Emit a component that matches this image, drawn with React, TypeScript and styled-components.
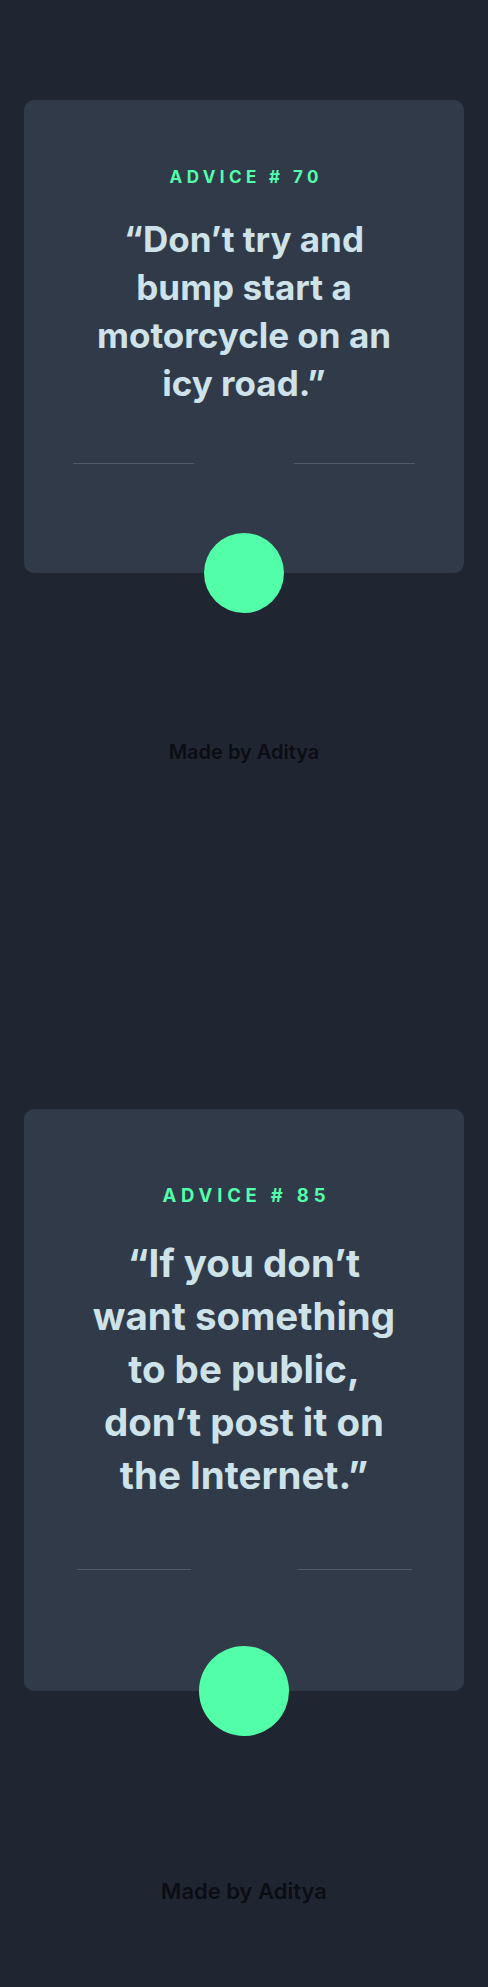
import React from "react";
import styled, { createGlobalStyle } from "styled-components";

const Global = createGlobalStyle`
  html, body { margin: 0; padding: 0; background: #1f2632; }
  body { font-family: Inter, "Noto Sans", sans-serif; }
`;

const Page = styled.main`
  min-height: 1987px;
  background: #1f2632;
  display: flex;
  flex-direction: column;
  padding-top: 100px;
  box-sizing: border-box;
`;

const Section = styled.section<{ $mt: number }>`
  display: flex;
  flex-direction: column;
  align-items: center;
  margin-top: ${(p) => p.$mt}px;
`;

const Card = styled.article<{ $padTop: number; $padBottom: number }>`
  position: relative;
  width: 440px;
  box-sizing: border-box;
  background: #313a49;
  border-radius: 10px;
  display: flex;
  flex-direction: column;
  align-items: center;
  padding: ${(p) => p.$padTop}px 0 ${(p) => p.$padBottom}px;
`;

const Label = styled.h1<{ $size: number; $spacing: number }>`
  margin: 0;
  font-size: ${(p) => p.$size}px;
  line-height: ${(p) => p.$size}px;
  font-weight: 700;
  letter-spacing: ${(p) => p.$spacing}px;
  padding-left: ${(p) => p.$spacing}px;
  color: #53ffaa;
`;

const Quote = styled.p<{ $size: number; $lineHeight: number; $gap: number }>`
  margin: ${(p) => p.$gap}px 0 0;
  text-align: center;
  font-size: ${(p) => p.$size}px;
  font-weight: 700;
  line-height: ${(p) => p.$lineHeight}px;
  letter-spacing: 0;
  color: #cee3e9;
`;

const QuoteLine = styled.span`
  display: block;
  white-space: nowrap;
`;

const Divider = styled.div<{ $gap: number; $mt: number }>`
  display: flex;
  gap: ${(p) => p.$gap}px;
  margin-top: ${(p) => p.$mt}px;
`;

const Rule = styled.span<{ $w: number }>`
  display: block;
  width: ${(p) => p.$w}px;
  height: 1px;
  background: #4f5b6d;
`;

const DiceButton = styled.button<{ $d: number }>`
  position: absolute;
  left: 50%;
  bottom: 0;
  width: ${(p) => p.$d}px;
  height: ${(p) => p.$d}px;
  transform: translate(-50%, 50%);
  border: none;
  border-radius: 50%;
  background: #52ffa8;
  padding: 0;
  cursor: pointer;
`;

const Credit = styled.footer<{ $size: number; $mt: number }>`
  margin-top: ${(p) => p.$mt}px;
  font-size: ${(p) => p.$size}px;
  line-height: ${(p) => p.$size + 4}px;
  font-weight: 600;
  color: #0b0d12;
`;

type Advice = {
  id: number;
  lines: string[];
  mt: number;
  labelSize: number;
  labelSpacing: number;
  padTop: number;
  quoteSize: number;
  quoteGap: number;
  lineHeight: number;
  dividerMt: number;
  ruleW: number;
  ruleGap: number;
  padBottom: number;
  dice: number;
  creditSize: number;
  creditMt: number;
};

const items: Advice[] = [
  {
    id: 70,
    lines: ["\u201CDon\u2019t try and", "bump start a", "motorcycle on an", "icy road.\u201D"],
    mt: 0,
    labelSize: 17,
    labelSpacing: 4.4,
    padTop: 69,
    quoteSize: 35,
    quoteGap: 29,
    lineHeight: 48,
    dividerMt: 56,
    ruleW: 121,
    ruleGap: 100,
    padBottom: 109,
    dice: 80,
    creditSize: 20,
    creditMt: 167,
  },
  {
    id: 85,
    lines: [
      "\u201CIf you don\u2019t",
      "want something",
      "to be public,",
      "don\u2019t post it on",
      "the Internet.\u201D",
    ],
    mt: 345,
    labelSize: 18.5,
    labelSpacing: 4.8,
    padTop: 77,
    quoteSize: 38.5,
    quoteGap: 32,
    lineHeight: 53,
    dividerMt: 67,
    ruleW: 114,
    ruleGap: 107,
    padBottom: 121,
    dice: 90,
    creditSize: 22,
    creditMt: 187,
  },
];

export default function App() {
  return (
    <>
      <Global />
      <Page>
        {items.map((a) => (
          <Section key={a.id} $mt={a.mt}>
            <Card $padTop={a.padTop} $padBottom={a.padBottom}>
              <Label $size={a.labelSize} $spacing={a.labelSpacing}>
                ADVICE # {a.id}
              </Label>
              <Quote $size={a.quoteSize} $lineHeight={a.lineHeight} $gap={a.quoteGap}>
                {a.lines.map((l) => (
                  <QuoteLine key={l}>{l}</QuoteLine>
                ))}
              </Quote>
              <Divider $gap={a.ruleGap} $mt={a.dividerMt}>
                <Rule $w={a.ruleW} />
                <Rule $w={a.ruleW} />
              </Divider>
              <DiceButton $d={a.dice} aria-label="New advice" />
            </Card>
            <Credit $size={a.creditSize} $mt={a.creditMt}>
              Made by Aditya
            </Credit>
          </Section>
        ))}
      </Page>
    </>
  );
}
